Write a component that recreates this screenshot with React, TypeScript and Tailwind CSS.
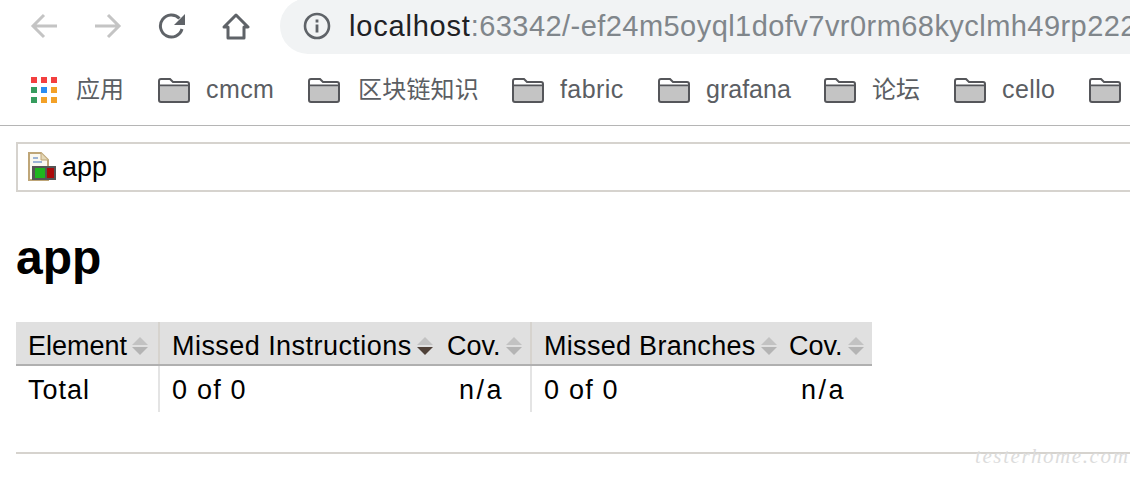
const sans = "font-['Liberation_Sans','Noto_Sans_CJK_SC',sans-serif]";

function Folder() {
  return (
    <svg width="32" height="26" viewBox="0 0 32 26" className="shrink-0">
      <path d="M1 4 a2 2 0 0 1 2-2 h9 l3 3 h14 a2 2 0 0 1 2 2 v16 a2 2 0 0 1-2 2 H3 a2 2 0 0 1-2-2 Z" fill="#fff" />
      <path d="M2 10 H30 V24 H2 Z" fill="#c4c4c4" />
      <path d="M1 4 a2 2 0 0 1 2-2 h9 l3 3 h14 a2 2 0 0 1 2 2 v16 a2 2 0 0 1-2 2 H3 a2 2 0 0 1-2-2 Z M2 8.5 H30" fill="none" stroke="#55565a" strokeWidth="2" />
    </svg>
  );
}

function Apps() {
  const c = ["#f33f3f", "#f33f3f", "#f33f3f", "#369c5e", "#2a8df2", "#f3a127", "#369c5e", "#f3a127", "#f3a127"];
  return (
    <div className="grid grid-cols-3 gap-x-[4px] gap-y-[4px] w-[26px] shrink-0">
      {c.map((x, i) => (
        <div key={i} className="w-[6px] h-[6px]" style={{ backgroundColor: x }} />
      ))}
    </div>
  );
}

function Bookmark({ label, w, className }: { label: string; w: number; className: string }) {
  return (
    <div className="flex items-center shrink-0">
      <Folder />
      <span className={`text-[#5b5e63] whitespace-nowrap ${className}`} style={{ width: w }}>
        {label}
      </span>
    </div>
  );
}

function Sort({ active }: { active?: boolean }) {
  return (
    <svg width="16" height="18" viewBox="0 0 16 18" className="shrink-0 ml-[5px]">
      <path d="M8 0 L16 8 H0 Z" fill="#c2c2c2" />
      <path d="M0 10 H16 L8 18 Z" fill={active ? "#4f4138" : "#b4b4b4"} />
    </svg>
  );
}

function Th({ label, active, className }: { label: string; active?: boolean; className: string }) {
  return (
    <th className={`bg-[#e0e0e0] border-b-2 border-[#b0b0b0] p-0 pt-[6px] leading-[36px] font-normal text-left ${className}`}>
      <span className="flex items-center whitespace-nowrap">
        {label}
        <Sort active={active} />
      </span>
    </th>
  );
}

export default function App() {
  return (
    <div className={`relative w-[1130px] h-[478px] overflow-hidden bg-white text-black ${sans}`}>
      <div className="flex items-center h-[56px] pl-[30px] -mt-[2px]">
        <div className="flex items-center gap-[36px] shrink-0">
          <svg width="28" height="28" viewBox="0 0 28 28" fill="none" stroke="#c4c4c4" strokeWidth="3">
            <path d="M27 14 H3 M14 3 L3 14 L14 25" />
          </svg>
          <svg width="28" height="28" viewBox="0 0 28 28" fill="none" stroke="#c4c4c4" strokeWidth="3">
            <path d="M1 14 H25 M14 3 L25 14 L14 25" />
          </svg>
          <svg width="28" height="28" viewBox="0 0 28 28">
            <path d="M24 17 A11 11 0 1 1 21.5 6.5" fill="none" stroke="#5f6368" strokeWidth="3" />
            <path d="M27 2 V13 H16 Z" fill="#5f6368" />
          </svg>
          <svg width="28" height="28" viewBox="0 0 28 28" fill="none" stroke="#5f6368" strokeWidth="3" strokeLinejoin="round">
            <path d="M2 15 L14 3 L26 15 H22 V26 H6 V15 Z" />
          </svg>
        </div>
        <div className="ml-[30px] flex-1 h-[56px] bg-[#f1f3f4] rounded-l-[28px] flex items-center pl-[23px] overflow-hidden">
          <svg width="28" height="28" viewBox="0 0 28 28" className="shrink-0">
            <circle cx="14" cy="14" r="12" fill="none" stroke="#5f6368" strokeWidth="2.6" />
            <rect x="12.6" y="12.5" width="2.8" height="8" fill="#5f6368" />
            <rect x="12.6" y="7.5" width="2.8" height="3" fill="#5f6368" />
          </svg>
          <span className="ml-[18px] pt-[2px] text-[29px] tracking-[0.8px] whitespace-nowrap text-[#202124]">
            localhost<span className="text-[#80868b] tracking-[0.45px]">:63342/-ef24m5oyql1dofv7vr0rm68kyclmh49rp222</span>
          </span>
        </div>
      </div>

      <div className="flex items-center h-[72px] pl-[31px] border-b border-[#b5b5b5] gap-[34px] overflow-hidden">
        <div className="flex items-center gap-[19px] shrink-0">
          <Apps />
          <span className="text-[24px] text-[#5b5e63]">应用</span>
        </div>
        <Bookmark label="cmcm" w={68} className="ml-[16px] text-[25px] tracking-[0.4px]" />
        <Bookmark label="区块链知识" w={120} className="ml-[18px] text-[24px] tracking-[0.2px]" />
        <Bookmark label="fabric" w={64} className="ml-[16px] text-[25px] tracking-[0.4px]" />
        <Bookmark label="grafana" w={84} className="ml-[16px] text-[25px]" />
        <Bookmark label="论坛" w={48} className="ml-[16px] text-[24px]" />
        <Bookmark label="cello" w={53} className="ml-[16px] text-[25px] tracking-[0.4px]" />
        <Folder />
      </div>

      <div className="ml-[16px] mt-[16px] h-[50px] border-2 border-r-0 border-[#d6d3ce] flex items-center pl-[10px] gap-[6px]">
        <svg width="28" height="30" viewBox="0 0 28 30" className="shrink-0">
          <path d="M1 1 H13 L20 8 V28 H1 Z" fill="#fbf8ef" stroke="#bfa678" strokeWidth="2" />
          <path d="M13 1 V8 H20" fill="#e6d9b8" stroke="#bfa678" strokeWidth="1" />
          <path d="M5 6 H10 M5 10 H14" stroke="#9db4d6" strokeWidth="2" />
          <rect x="4" y="14" width="24" height="14" fill="#555" />
          <rect x="7" y="16" width="10" height="10" fill="#1fb51f" />
          <rect x="19" y="16" width="7" height="10" fill="#ab0a0a" />
        </svg>
        <span className="text-[27px]">app</span>
      </div>

      <h1 className="ml-[16px] mt-[37px] text-[48px] leading-[58px] font-bold">app</h1>

      <table className="ml-[16px] mt-[35px] w-[856px] table-fixed border-collapse text-[27px]">
        <colgroup>
          <col className="w-[143px]" />
          <col className="w-[277px]" />
          <col className="w-[95px]" />
          <col className="w-[247px]" />
          <col className="w-[94px]" />
        </colgroup>
        <thead>
          <tr>
            <Th label="Element" className="pl-[12px] border-r-2 border-r-[#d6d3ce]" />
            <Th label="Missed Instructions" active className="pl-[12px] tracking-[0.45px]" />
            <Th label="Cov." className="pl-[11px] border-r-2 border-r-[#d6d3ce]" />
            <Th label="Missed Branches" className="pl-[12px] tracking-[0.3px]" />
            <Th label="Cov." className="pl-[11px]" />
          </tr>
        </thead>
        <tbody>
          <tr className="h-[47px]">
            <td className="pl-[12px] pt-[2px] p-0 tracking-[1px] border-r-2 border-[#e4e4e4]">Total</td>
            <td className="pl-[12px] pt-[2px] p-0 tracking-[1.2px]">0 of 0</td>
            <td className="pr-[26px] pt-[2px] p-0 tracking-[2.5px] text-right border-r-2 border-[#e4e4e4]">n/a</td>
            <td className="pl-[12px] pt-[2px] p-0 tracking-[1.2px]">0 of 0</td>
            <td className="pr-[26px] pt-[2px] p-0 tracking-[2.5px] text-right">n/a</td>
          </tr>
        </tbody>
      </table>

      <div className="ml-[16px] mt-[40px] h-[2px] bg-[#d6d3ce]" />

      <span className="absolute left-[975px] top-[441px] text-[21px] tracking-[1.6px] italic text-[#dcdcdc] font-['Liberation_Serif',serif]">
        testerhome.com
      </span>
    </div>
  );
}
